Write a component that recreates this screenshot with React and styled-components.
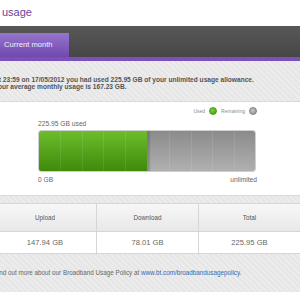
import React from 'react'
import styled, { createGlobalStyle } from 'styled-components'

const usage = {
  date: '23:59 on 17/05/2012',
  used: 225.95,
  average: 167.23,
  upload: 147.94,
  download: 78.01,
  share: 0.5,
}

const GlobalStyle = createGlobalStyle`
  html, body {
    margin: 0;
    padding: 0;
    background: #fff;
    overflow: hidden;
  }
  body {
    font-family: "Liberation Sans", Arial, sans-serif;
  }
`

const Page = styled.div`
  width: 320px;
  margin-left: -6px;
`

const Title = styled.h1`
  margin: 0;
  height: 26px;
  padding-left: 8px;
  font-size: 11px;
  line-height: 24px;
  font-weight: normal;
  color: #6b3fa0;
`

const TabBar = styled.div`
  display: flex;
  align-items: flex-end;
  height: 31px;
  background: linear-gradient(#585858, #464646);
`

const Tab = styled.div`
  box-sizing: border-box;
  width: 75px;
  height: 24px;
  padding-left: 10px;
  font-size: 7.6px;
  line-height: 24px;
  color: #f3eefc;
  background: linear-gradient(#9676cc, #7048b0);
`

const Strip = styled.div`
  height: 4px;
  background: #7a51b7;
`

const Content = styled.div`
  background: repeating-linear-gradient(
    45deg,
    #ececec 0,
    #ececec 2px,
    #e6e6e6 2px,
    #e6e6e6 4px
  );
`

const Info = styled.div`
  padding: 14.5px 0 10.5px;
  font-size: 6.6px;
  line-height: 7.5px;
  font-weight: bold;
  color: #555;
`

const Panel = styled.div`
  box-sizing: border-box;
  height: 95px;
  padding: 5px 0 0 43px;
  background: #fff;
  border: 1px solid #dadada;
`

const Meter = styled.div`
  width: 219px;
  display: flex;
  flex-direction: column;
`

const Legend = styled.div`
  display: flex;
  justify-content: flex-end;
  align-items: center;
  height: 8px;
  font-size: 5px;
  color: #8a8a8a;
`

const Key = styled.span`
  margin-left: 4px;
`

const Dot = styled.span`
  width: 8px;
  height: 8px;
  margin-left: 4px;
  border-radius: 50%;
  box-sizing: border-box;
  background: ${p => (p.used ? 'radial-gradient(circle at 40% 35%, #7ed23a, #3f9a0c)' : 'radial-gradient(circle at 40% 35%, #c4c4c4, #8e8e8e)')};
  border: 1px solid ${p => (p.used ? '#4a9a14' : '#7f7f7f')};
`

const Label = styled.div`
  display: flex;
  justify-content: space-between;
  font-size: 6.7px;
  line-height: 8px;
  color: #666;
  margin-top: ${p => p.gap}px;
`

const Bar = styled.div`
  position: relative;
  display: flex;
  width: 218px;
  height: 42px;
  margin-top: 2px;
  box-sizing: border-box;
  border: 1px solid #cfcfcf;
  border-radius: 3px;
  overflow: hidden;
`

const Used = styled.div`
  background: linear-gradient(#6cbd2c, #3f8a0b);
`

const Remaining = styled.div`
  flex: 1;
  background: linear-gradient(to right, rgba(60, 60, 60, 0.45), rgba(60, 60, 60, 0) 4px),
    linear-gradient(#8b8b8b, #b0b0b0);
`

const Ticks = styled.div`
  position: absolute;
  inset: 0;
  background: repeating-linear-gradient(
    to right,
    transparent 0,
    transparent 20.8px,
    rgba(255, 255, 255, 0.09) 20.8px,
    rgba(255, 255, 255, 0.09) 21.8px
  );
`

const Table = styled.div`
  display: grid;
  grid-template-columns: 103px 102px 102px;
  margin-top: 7px;
  border-top: 1px solid #d6d6d6;
  border-bottom: 1px solid #d6d6d6;
`

const Head = styled.div`
  height: 27px;
  display: flex;
  align-items: center;
  justify-content: center;
  font-size: 6.3px;
  color: #555;
  background: linear-gradient(#f7f7f7, #e8e8e8);
  border-right: 1px solid #d6d6d6;
  border-bottom: 1px solid #d6d6d6;
`

const Cell = styled.div`
  height: 21px;
  display: flex;
  align-items: center;
  justify-content: center;
  font-size: 7.6px;
  color: #666;
  background: #fff;
  border-right: 1px solid #d6d6d6;
`

const Footer = styled.div`
  padding: 15px 0 15px;
  font-size: 6.3px;
  line-height: 8px;
  color: #666;
`

const Link = styled.a`
  color: #2b6cb8;
  text-decoration: none;
`

const gb = n => `${n.toFixed(2)} GB`

export default function App() {
  return (
    <>
      <GlobalStyle />
      <Page>
        <Title>usage</Title>
        <TabBar>
          <Tab>Current month</Tab>
        </TabBar>
        <Strip />
        <Content>
          <Info>
            At {usage.date} you had used {gb(usage.used)} of your unlimited usage allowance.
            <br />
            Your average monthly usage is {gb(usage.average)}.
          </Info>
          <Panel>
            <Meter>
              <Legend>
                <Key>Used</Key>
                <Dot used />
                <Key>Remaining</Key>
                <Dot />
              </Legend>
              <Label gap={5}>{gb(usage.used)} used</Label>
              <Bar>
                <Used style={{ width: `${usage.share * 100}%` }} />
                <Remaining />
                <Ticks />
              </Bar>
              <Label gap={4}>
                <span>0 GB</span>
                <span>unlimited</span>
              </Label>
            </Meter>
          </Panel>
          <Table>
            <Head>Upload</Head>
            <Head>Download</Head>
            <Head>Total</Head>
            <Cell>{gb(usage.upload)}</Cell>
            <Cell>{gb(usage.download)}</Cell>
            <Cell>{gb(usage.used)}</Cell>
          </Table>
          <Footer>
            Find out more about our Broadband Usage Policy at{' '}
            <Link href="#">www.bt.com/broadbandusagepolicy</Link>.
          </Footer>
        </Content>
      </Page>
    </>
  )
}
